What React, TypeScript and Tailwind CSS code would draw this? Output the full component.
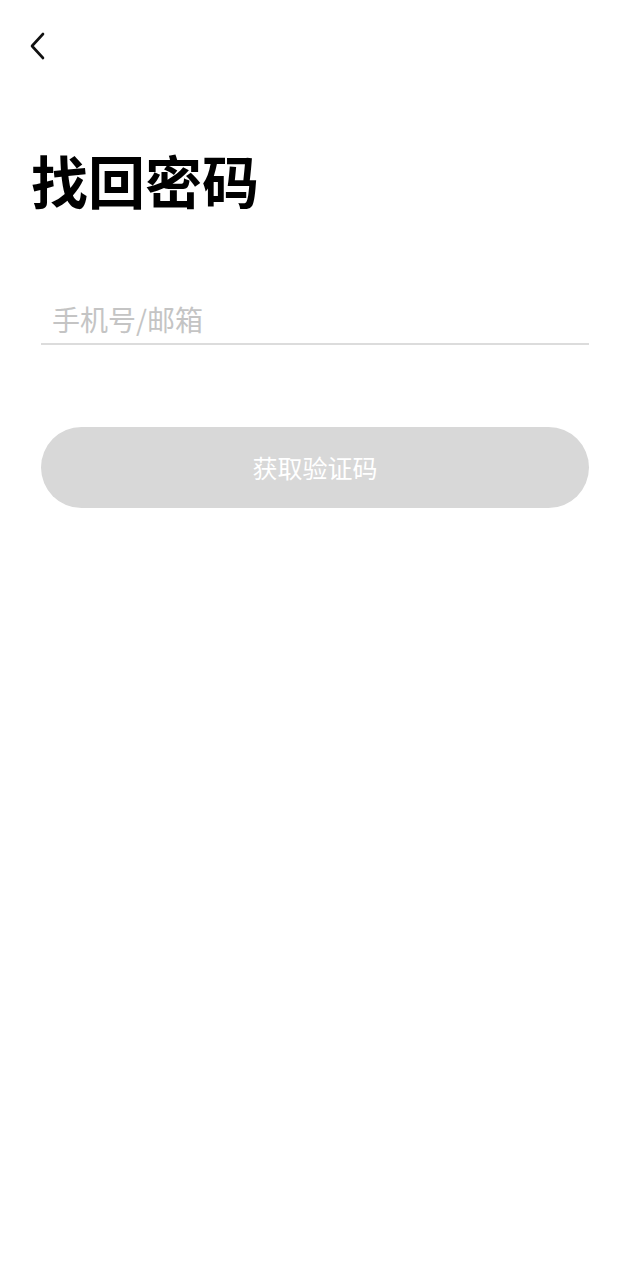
import React from "react";

export default function App() {
  return (
    <div
      className="w-[630px] h-[1280px] bg-white flex flex-col"
      style={{ fontFamily: '"Noto Sans CJK SC", "Noto Sans", sans-serif' }}
    >
      <div className="h-[92px] pl-[28px] pt-[32px]">
        <svg width="20" height="28" viewBox="0 0 20 28" fill="none">
          <path d="M15 2 L4 14 L15 26" stroke="#111" strokeWidth="2.6" strokeLinecap="round" strokeLinejoin="round" />
        </svg>
      </div>
      <h1 className="pl-[31px] mt-[49px] text-[57px] leading-[76px] font-bold text-black">找回密码</h1>
      <div className="mx-[41px] mt-[83px] border-b-[2px] border-[#dcdcdc] pb-[5px]">
        <input
          placeholder="手机号/邮箱"
          className="w-full pl-[11px] text-[28px] leading-[38px] outline-none placeholder:text-[#c4c4c4] bg-transparent"
          style={{ fontFamily: '"Noto Sans CJK SC", sans-serif' }}
        />
      </div>
      <button className="mx-[41px] mt-[82px] h-[81px] rounded-full bg-[#d8d8d8] text-white text-[25px] flex items-center justify-center">
        获取验证码
      </button>
    </div>
  );
}
